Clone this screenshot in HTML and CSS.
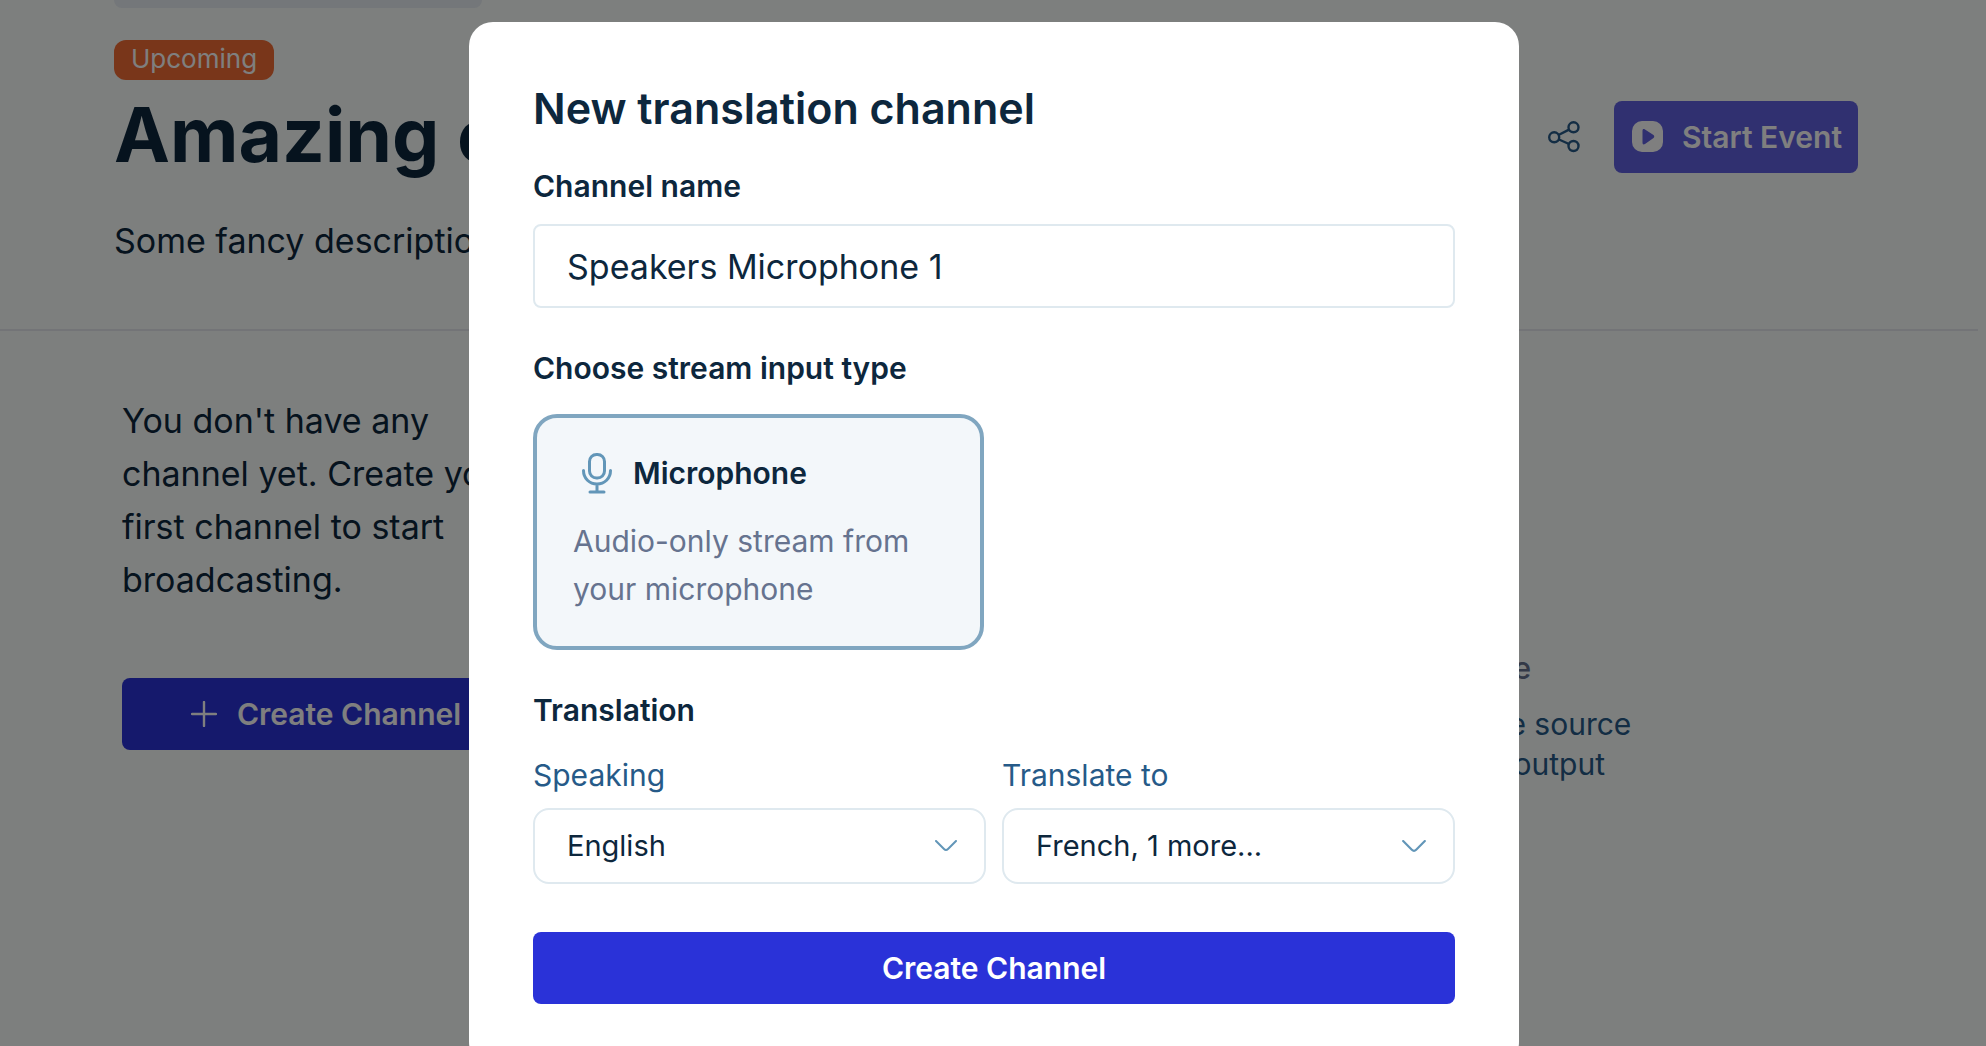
FILE: index.html
```html
<!DOCTYPE html>
<html lang="en">
<head>
    <meta charset="UTF-8">
    <meta name="viewport" content="width=device-width, initial-scale=1.0">
    <title>New translation channel</title>
    <link rel="stylesheet" href="styles.css">
</head>
<body>
    <div class="page">
        <header class="event-header">
            <div class="banner"></div>
            <span class="badge">Upcoming</span>
            <div class="title-row">
                <h1>Amazing event</h1>
                <div class="actions">
                    <button class="icon-button" type="button" aria-label="Share">
                        <svg width="32" height="32" viewBox="0 0 32 32" fill="none" stroke="currentColor" stroke-width="2.4">
                            <circle cx="6.200" cy="16.300" r="5"/>
                            <circle cx="25.500" cy="6.300" r="5"/>
                            <circle cx="25.500" cy="25" r="5"/>
                            <path d="M11 13.800l10-5.200M11 18.500l10 4.500"/>
                        </svg>
                    </button>
                    <button class="start-button" type="button">
                        <svg width="32" height="32" viewBox="0 0 32 32">
                            <rect width="31" height="31" rx="10" fill="#fff"/>
                            <path d="M10.500 10c0-2 1-2.500 2.500-1.500l8.500 5.500c1 .7 1 2.300 0 3l-8.500 6c-1.500 1-2.500 .5-2.500-1.500z" fill="#6060e0"/>
                        </svg>
                        Start Event
                    </button>
                </div>
            </div>
            <p class="description">Some fancy description</p>
        </header>

        <main class="content">
            <section class="channels">
                <p>You don't have any channel yet. Create your first channel to start broadcasting.</p>
                <button class="create-button" type="button">
                    <svg width="26" height="26" viewBox="0 0 26 26" fill="none" stroke="currentColor" stroke-width="2.4" stroke-linecap="round">
                        <path d="M13 1v24M1 13h24"/>
                    </svg>
                    Create Channel
                </button>
            </section>
            <section class="preview">
                <h2>No source</h2>
                <p>Select the source<br>Start the output</p>
            </section>
        </main>
    </div>

    <div class="overlay">
        <form class="modal" role="dialog" aria-labelledby="modalTitle">
            <h2 id="modalTitle">New translation channel</h2>

            <label class="field-label" for="channelName">Channel name</label>
            <input class="text-input" id="channelName" type="text" value="Speakers Microphone 1">

            <fieldset>
                <legend class="field-label">Choose stream input type</legend>
                <label class="type-card">
                    <input type="radio" name="inputType" value="microphone" checked>
                    <span class="type-head">
                        <svg width="32" height="42" viewBox="0 0 32 42" fill="none" stroke="currentColor" stroke-width="3" stroke-linecap="round">
                            <rect x="8.500" y="2.500" width="15" height="23.500" rx="7"/>
                            <path d="M2.500 18.500c0 8 6 13.500 13.500 13.500s13.500-5.500 13.500-13.500M16 32v8M9 40h14"/>
                        </svg>
                        Microphone
                    </span>
                    <span class="type-text">Audio-only stream from your microphone</span>
                </label>
            </fieldset>

            <fieldset>
                <legend class="field-label">Translation</legend>
                <div class="languages">
                    <div class="language">
                        <label for="speaking">Speaking</label>
                        <div class="select-box">
                            <select id="speaking">
                                <option>English</option>
                            </select>
                            <svg width="22" height="12" viewBox="0 0 22 12" fill="none" stroke="currentColor" stroke-width="2" stroke-linecap="round">
                                <path d="M1 1l8 8q2 2 4 0l8-8"/>
                            </svg>
                        </div>
                    </div>
                    <div class="language">
                        <label for="translateTo">Translate to</label>
                        <div class="select-box">
                            <select id="translateTo">
                                <option>French, 1 more...</option>
                            </select>
                            <svg width="24" height="13" viewBox="0 0 22 12" fill="none" stroke="currentColor" stroke-width="2" stroke-linecap="round">
                                <path d="M1 1l8 8q2 2 4 0l8-8"/>
                            </svg>
                        </div>
                    </div>
                </div>
            </fieldset>

            <button class="submit-button" type="button">Create Channel</button>
        </form>
    </div>
</body>
</html>
```
FILE: styles.css
```css
* {
    box-sizing: border-box;
}

body {
    margin: 0;
    font-family: Inter, 'Open Sans', sans-serif;
    font-size: 30px;
    line-height: 40px;
    color: #0d273d;
    background-color: #fbfefc;
    overflow: hidden;
}

h1, h2, p {
    margin: 0;
}

button, input, select {
    font: inherit;
    color: inherit;
}

button {
    border: none;
    border-radius: 8px;
    cursor: pointer;
}

svg {
    display: block;
    flex-shrink: 0;
}

/* Page behind the dialog */

.event-header {
    margin-right: 8px;
    padding: 0 120px 64px 114px;
    border-bottom: 2px solid #e6e8ee;
}

.banner {
    width: 368px;
    height: 8px;
    margin-bottom: 32px;
    border-radius: 0 0 8px 8px;
    background-color: #e8eef4;
}

.badge {
    display: block;
    width: fit-content;
    height: 40px;
    padding: 0 17px;
    border-radius: 12px;
    font-size: 26px;
    line-height: 38px;
    color: #fff;
    background-color: #f26c34;
}

.title-row {
    display: flex;
    align-items: center;
    justify-content: space-between;
    margin-top: 13px;
}

h1 {
    font-size: 75px;
    line-height: 84px;
    padding-bottom: 4px;
    font-weight: 700;
}

.actions {
    display: flex;
    align-items: center;
    gap: 34px;
}

.icon-button {
    padding: 0;
    color: #265a88;
    background: none;
}

.start-button {
    display: flex;
    align-items: center;
    gap: 18px;
    height: 72px;
    padding: 0 16px 0 18px;
    font-weight: 600;
    color: #fff;
    background-color: #6060e0;
}

.description {
    margin-top: 36px;
    font-size: 34px;
    line-height: 48px;
}

.content {
    display: flex;
    justify-content: space-between;
    padding: 63px 302px 0 122px;
}

.channels {
    width: 408px;
}

.channels p {
    font-size: 34px;
    line-height: 53px;
}

.create-button {
    display: flex;
    align-items: center;
    justify-content: center;
    gap: 20px;
    width: 100%;
    height: 72px;
    margin-top: 72px;
    font-weight: 600;
    color: #fff;
    background-color: #2a32d8;
}

.preview {
    width: 300px;
    padding-top: 254px;
    white-space: nowrap;
    color: #265a88;
}

.preview h2 {
    margin-bottom: 16px;
    font-size: 30px;
    font-weight: 500;
    color: #66738f;
}

/* Dialog */

.overlay {
    position: fixed;
    inset: 0;
    display: flex;
    justify-content: center;
    align-items: flex-start;
    padding: 22px 0 0 2px;
    overflow: hidden;
    background-color: rgba(0, 0, 0, 0.5);
}

.modal {
    width: 100%;
    max-width: 1050px;
    padding: 62px 64px;
    border-radius: 24px;
    background-color: #fff;
}

.modal h2 {
    margin-bottom: 34px;
    font-size: 43px;
    line-height: 48px;
    font-weight: 600;
}

.field-label {
    display: block;
    padding: 0;
    font-weight: 600;
}

.text-input {
    width: 100%;
    height: 84px;
    margin-top: 18px;
    padding: 0 32px;
    border: 2px solid #dfe9ef;
    border-radius: 8px;
    font-size: 34px;
    background-color: #fff;
}

fieldset {
    min-width: 0;
    margin: 40px 0 0;
    padding: 0;
    border: none;
}

.type-card {
    display: block;
    width: 451px;
    margin-top: 26px;
    padding: 31px 36px 33px;
    border: 4px solid #80a6c0;
    border-radius: 24px;
    background-color: #f3f7fa;
    cursor: pointer;
}

.type-card input {
    position: absolute;
    opacity: 0;
}

.type-head {
    display: flex;
    align-items: center;
    gap: 20px;
    height: 48px;
    padding-left: 8px;
    font-weight: 600;
}

.type-head svg {
    color: #6296b8;
}

.type-text {
    display: block;
    margin-top: 20px;
    line-height: 48px;
    color: #66738f;
}

.languages {
    display: grid;
    grid-template-columns: 1fr 1fr;
    gap: 16px;
    margin-top: 25px;
}

.language label {
    display: block;
    margin-bottom: 13px;
    color: #265a88;
}

.select-box {
    position: relative;
}

.select-box select {
    display: block;
    width: 100%;
    height: 76px;
    padding: 0 64px 0 32px;
    border: 2px solid #dfe9ef;
    border-radius: 16px;
    font-size: 29px;
    appearance: none;
    background-color: #fff;
}

.select-box svg {
    position: absolute;
    top: 32px;
    right: 29px;
    color: #6296b8;
    pointer-events: none;
}

.submit-button {
    display: block;
    width: 100%;
    height: 72px;
    margin-top: 48px;
    font-weight: 600;
    color: #fff;
    background-color: #2a32d8;
}
```
